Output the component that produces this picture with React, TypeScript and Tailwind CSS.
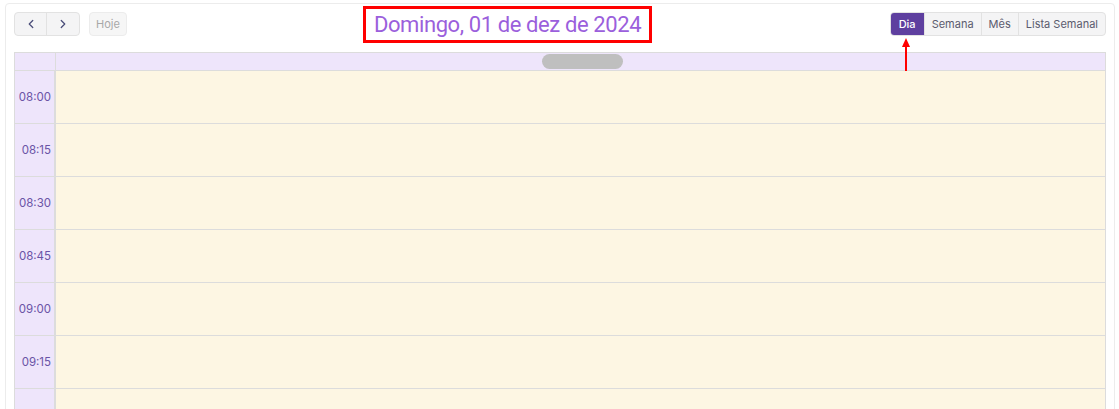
import { ChevronLeft, ChevronRight } from "lucide-react";

const times = ["08:00", "08:15", "08:30", "08:45", "09:00", "09:15", ""];

const views = ["Dia", "Semana", "Mês", "Lista Semanal"];

const App = () => {
  return (
    <main className="h-[409px] overflow-hidden bg-white pl-[5px] pr-[4px] pt-[3px] font-['Inter',sans-serif]">
      <div className="h-[420px] rounded-t border border-[#ececec] px-[8px] pt-[8px]">
        {/* toolbar */}
        <div className="relative flex h-[40px] items-start justify-between">
          <div className="mt-[0px] flex items-center gap-[9px]">
            <div className="flex h-[24px] overflow-hidden rounded border border-[#e2e2e2] bg-[#f4f4f5]">
              <button className="flex w-[32px] items-center justify-center border-r border-[#e2e2e2] text-[#4b4e7a]">
                <ChevronLeft size={14} strokeWidth={2.2} />
              </button>
              <button className="flex w-[32px] items-center justify-center text-[#4b4e7a]">
                <ChevronRight size={14} strokeWidth={2.2} />
              </button>
            </div>
            <button className="h-[24px] rounded border border-[#ececec] bg-[#f6f6f6] px-[6px] text-[11px] text-[#a8a8a8]">
              Hoje
            </button>
          </div>

          <div className="absolute left-[349px] top-[-6px] flex h-[37px] w-[289px] items-center justify-center border-[3px] border-[#ff0000]">
            <span className="whitespace-nowrap font-['Roboto',sans-serif] text-[22px] leading-none tracking-[-0.4px] text-[#9b5fdc]">
              Domingo, 01 de dez de 2024
            </span>
          </div>

          <div className="relative flex h-[24px] overflow-hidden rounded border border-[#e2e2e2] bg-[#f4f4f5] text-[11px]">
            {views.map((v, i) => (
              <button
                key={v}
                className={`px-[7px] ${
                  i === 0
                    ? "bg-[#5e3f9f] px-[8px] font-medium text-white"
                    : "border-l border-[#e2e2e2] text-[#5b5b6e]"
                }`}
              >
                {v}
              </button>
            ))}
          </div>
          <div className="absolute right-[196px] top-[26px] flex flex-col items-center">
            <div className="h-0 w-0 border-x-[4px] border-b-[9px] border-x-transparent border-b-[#ff0000]" />
            <div className="h-[24px] w-[2px] bg-[#ff0000]" />
          </div>
        </div>

        {/* grid */}
        <div className="border border-[#dcdcdc]">
          <div className="flex h-[18px] border-b border-[#dcdcdc] bg-[#eee5fb]">
            <div className="w-[41px] border-r border-[#dcdcdc]" />
            <div className="flex flex-1 items-center justify-center pl-[4px]">
              <div className="h-[15px] w-[81px] rounded-full bg-[#bfbfbf]" />
            </div>
          </div>
          {times.map((t, i) => (
            <div key={i} className="flex h-[53px] border-b border-[#dcdcdc]">
              <div className="flex w-[41px] items-center justify-end border-r-2 border-[#dcdcdc] bg-[#eee5fb] pr-[3px] pt-[2px] text-[11.5px] text-[#6a53a6]">
                {t}
              </div>
              <div className="flex-1 bg-[#fdf6e3]" />
            </div>
          ))}
        </div>
      </div>
    </main>
  );
};

export default App;
